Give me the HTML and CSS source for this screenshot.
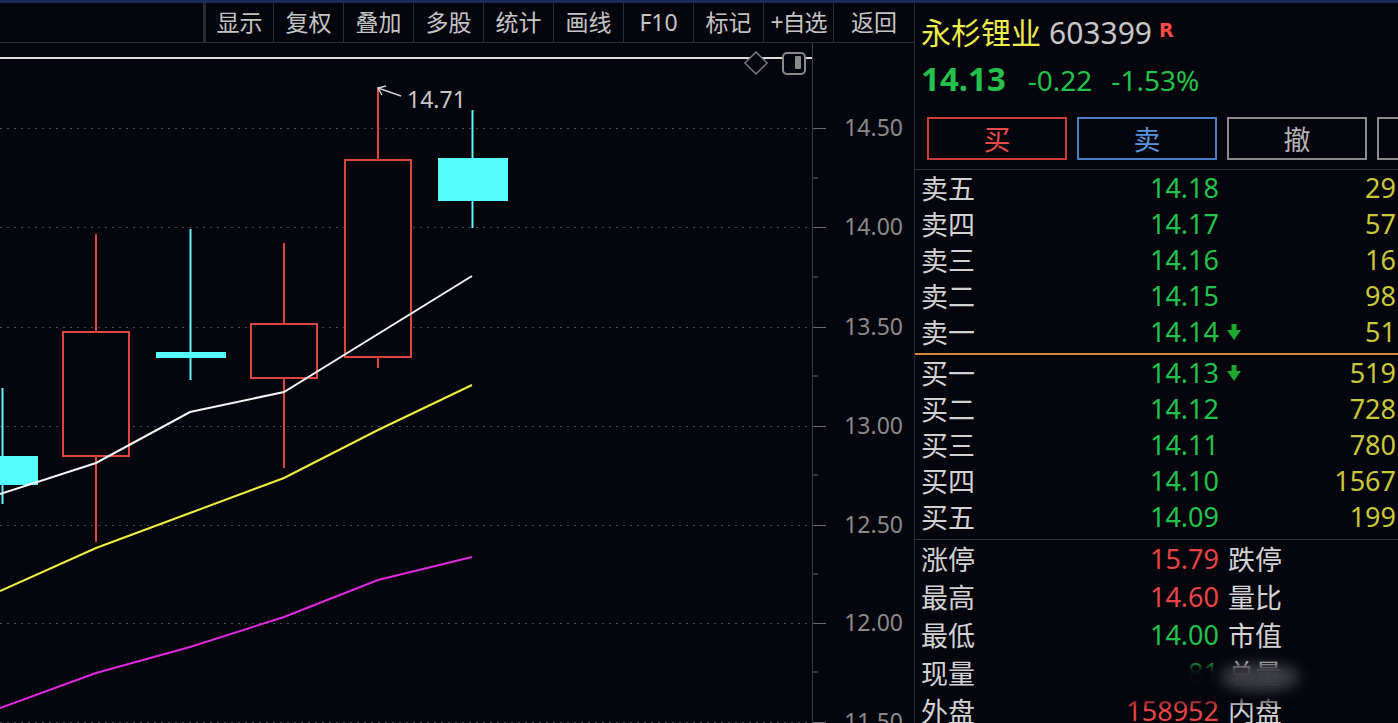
FILE: index.html
```html
<!DOCTYPE html>
<html lang="zh-CN">
<head>
  <meta charset="UTF-8">
  <title>永杉锂业 603399</title>
  <link rel="stylesheet" href="styles.css">
</head>
<body>
  <div class="app">
    <div class="main">
      <div class="toolbar">
        <div class="toolbar-space"></div>
        <button class="tool tool-first">显示</button>
        <button class="tool">复权</button>
        <button class="tool">叠加</button>
        <button class="tool">多股</button>
        <button class="tool">统计</button>
        <button class="tool">画线</button>
        <button class="tool">F10</button>
        <button class="tool">标记</button>
        <button class="tool tool-fav">+自选</button>
        <button class="tool tool-last">返回</button>
      </div>

      <svg class="chart" width="914" height="680" viewBox="0 43 914 680">
        <!-- grid -->
        <g class="grid">
          <line x1="0" y1="128.5" x2="810" y2="128.5"/>
          <line x1="0" y1="227.5" x2="810" y2="227.5"/>
          <line x1="0" y1="327.5" x2="810" y2="327.5"/>
          <line x1="0" y1="426.5" x2="810" y2="426.5"/>
          <line x1="0" y1="525.5" x2="810" y2="525.5"/>
          <line x1="0" y1="623.5" x2="810" y2="623.5"/>
          <line x1="0" y1="722.5" x2="810" y2="722.5"/>
        </g>
        <line class="frame-top" x1="0" y1="58" x2="812" y2="58"/>
        <line class="axis-line" x1="812.5" y1="43" x2="812.5" y2="723"/>
        <g class="ticks">
          <line x1="813" y1="128.5" x2="826" y2="128.5"/>
          <line x1="813" y1="178" x2="818" y2="178"/>
          <line x1="813" y1="227.5" x2="826" y2="227.5"/>
          <line x1="813" y1="277" x2="818" y2="277"/>
          <line x1="813" y1="327.5" x2="826" y2="327.5"/>
          <line x1="813" y1="376" x2="818" y2="376"/>
          <line x1="813" y1="426.5" x2="826" y2="426.5"/>
          <line x1="813" y1="475" x2="818" y2="475"/>
          <line x1="813" y1="525.5" x2="826" y2="525.5"/>
          <line x1="813" y1="574" x2="818" y2="574"/>
          <line x1="813" y1="623.5" x2="826" y2="623.5"/>
          <line x1="813" y1="672" x2="818" y2="672"/>
          <line x1="813" y1="722.5" x2="826" y2="722.5"/>
        </g>
        <g class="axis-labels">
          <text x="903" y="136">14.50</text>
          <text x="903" y="235">14.00</text>
          <text x="903" y="335">13.50</text>
          <text x="903" y="434">13.00</text>
          <text x="903" y="533">12.50</text>
          <text x="903" y="631">12.00</text>
          <text x="903" y="730">11.50</text>
        </g>

        <!-- chart tools -->
        <polygon class="icon" points="756,52 767,63 756,74 745,63"/>
        <rect class="icon icon-box" x="783" y="53" width="22" height="21" rx="4"/>
        <rect class="icon-fill" x="795" y="56" width="6" height="13" rx="1"/>

        <!-- candles -->
        <g class="down">
          <line x1="2.5" y1="388" x2="2.5" y2="504"/>
          <rect x="-2" y="456" width="40" height="29"/>
          <line x1="190.5" y1="229" x2="190.5" y2="380"/>
          <rect x="156" y="352" width="70" height="6"/>
          <line x1="472.5" y1="110" x2="472.5" y2="228"/>
          <rect x="438" y="158" width="70" height="43"/>
        </g>
        <g class="up">
          <line x1="96" y1="234" x2="96" y2="332"/>
          <line x1="96" y1="456" x2="96" y2="542"/>
          <rect x="63" y="332" width="66" height="124"/>
          <line x1="284" y1="243" x2="284" y2="324"/>
          <line x1="284" y1="378" x2="284" y2="468"/>
          <rect x="251" y="324" width="66" height="54"/>
          <line x1="378" y1="88" x2="378" y2="160"/>
          <line x1="378" y1="357" x2="378" y2="368"/>
          <rect x="345" y="160" width="66" height="197"/>
        </g>

        <!-- moving averages -->
        <polyline class="ma ma5" points="0,494 96,463 190,412 284,392 378,334 472,276"/>
        <polyline class="ma ma10" points="0,591 96,548 190,513 284,478 378,430 472,385"/>
        <polyline class="ma ma20" points="0,708 96,673 190,647 284,617 378,580 472,557"/>

        <!-- high marker -->
        <g class="mark">
          <line x1="378" y1="88" x2="401" y2="96"/>
          <polyline points="386,86 378,88 382,95"/>
        </g>
        <text class="mark-text" x="407" y="108">14.71</text>
      </svg>
    </div>

    <aside class="quote">
      <div class="q-title">
        <span class="q-name">永杉锂业</span>
        <span class="q-code">603399</span>
        <span class="q-flag">R</span>
      </div>
      <div class="q-price">
        <span class="q-last">14.13</span>
        <span class="q-chg q-chg-first">-0.22</span>
        <span class="q-chg">-1.53%</span>
      </div>
      <div class="q-actions">
        <button class="q-btn q-buy">买</button>
        <button class="q-btn q-sell">卖</button>
        <button class="q-btn q-cancel">撤</button>
        <button class="q-btn q-cancel"></button>
      </div>

      <div class="book book-sell">
        <div class="row"><span class="lbl">卖五</span><span class="px">14.18</span><span class="flag"></span><span class="vol">29</span></div>
        <div class="row"><span class="lbl">卖四</span><span class="px">14.17</span><span class="flag"></span><span class="vol">57</span></div>
        <div class="row"><span class="lbl">卖三</span><span class="px">14.16</span><span class="flag"></span><span class="vol">16</span></div>
        <div class="row"><span class="lbl">卖二</span><span class="px">14.15</span><span class="flag"></span><span class="vol">98</span></div>
        <div class="row"><span class="lbl">卖一</span><span class="px">14.14</span><span class="flag"><svg width="16" height="18" viewBox="0 0 16 18"><rect x="5.5" y="1" width="5" height="8"/><polygon points="1,7 15,7 8,17"/></svg></span><span class="vol">51</span></div>
      </div>

      <div class="book book-buy">
        <div class="row"><span class="lbl">买一</span><span class="px">14.13</span><span class="flag"><svg width="16" height="18" viewBox="0 0 16 18"><rect x="5.5" y="1" width="5" height="8"/><polygon points="1,7 15,7 8,17"/></svg></span><span class="vol">519</span></div>
        <div class="row"><span class="lbl">买二</span><span class="px">14.12</span><span class="flag"></span><span class="vol">728</span></div>
        <div class="row"><span class="lbl">买三</span><span class="px">14.11</span><span class="flag"></span><span class="vol">780</span></div>
        <div class="row"><span class="lbl">买四</span><span class="px">14.10</span><span class="flag"></span><span class="vol">1567</span></div>
        <div class="row"><span class="lbl">买五</span><span class="px">14.09</span><span class="flag"></span><span class="vol">199</span></div>
      </div>

      <div class="stats">
        <div class="srow"><span class="lbl">涨停</span><span class="val up-c">15.79</span><span class="lbl2">跌停</span></div>
        <div class="srow"><span class="lbl">最高</span><span class="val up-c">14.60</span><span class="lbl2">量比</span></div>
        <div class="srow"><span class="lbl">最低</span><span class="val down-c">14.00</span><span class="lbl2">市值</span></div>
        <div class="srow"><span class="lbl">现量</span><span class="val down-c">81</span><span class="lbl2">总量</span></div>
        <div class="srow"><span class="lbl">外盘</span><span class="val up-c">158952</span><span class="lbl2">内盘</span></div>
      </div>
      <div class="smudge"></div>
      <div class="smudge-light"></div>
    </aside>
  </div>
</body>
</html>
```

FILE: styles.css
```css
* {
  box-sizing: border-box;
}

body {
  margin: 0;
  background: #05050d;
  color: #d0d0d0;
  font-family: "Noto Sans", "Noto Sans CJK SC", sans-serif;
  overflow: hidden;
}

.app {
  display: flex;
  height: 723px;
  border-top: 3px solid #1b2b58;
}

/* left side: toolbar + kline */
.main {
  width: 914px;
  display: flex;
  flex-direction: column;
}

.toolbar {
  display: flex;
  height: 40px;
  border-bottom: 1px solid #2c2c33;
}

.toolbar-space {
  flex: 1;
  border-right: 3px solid #2a2a30;
}

.tool {
  width: 70px;
  padding: 0;
  background: none;
  border: none;
  border-right: 1px solid #2c2c33;
  color: #c4c4c4;
  font-family: "Noto Sans", "Noto Sans CJK SC", sans-serif;
  font-size: 23px;
  line-height: 39px;
  text-align: center;
  white-space: nowrap;
}

.tool-first {
  width: 68px;
}

.tool-fav {
  letter-spacing: -1px;
}

.tool-last {
  width: 80px;
  border-right: none;
}

.chart {
  display: block;
}

.grid line {
  stroke: #4a4a52;
  stroke-width: 1;
  stroke-dasharray: 2 5;
}

.frame-top {
  stroke: #dcdcdc;
  stroke-width: 2;
}

.axis-line {
  stroke: #3a3a42;
  stroke-width: 1;
}

.ticks line {
  stroke: #6a6a6a;
  stroke-width: 1;
}

.axis-labels text {
  font-family: "Noto Sans", sans-serif;
  font-size: 23px;
  fill: #8a8a8a;
  text-anchor: end;
}

.icon {
  fill: #05050d;
  stroke: #7a7a7a;
  stroke-width: 1.5;
}

.icon-box {
  stroke: #8a8a8a;
  stroke-width: 2;
}

.icon-fill {
  fill: #8a8a8a;
}

.down line {
  stroke: #5ef6f6;
  stroke-width: 2;
}

.down rect {
  fill: #55ffff;
}

.up line {
  stroke: #e0443f;
  stroke-width: 2;
}

.up rect {
  fill: #05050d;
  stroke: #e0443f;
  stroke-width: 2;
}

.ma {
  fill: none;
  stroke-width: 2;
}

.ma5 {
  stroke: #f6f6f6;
}

.ma10 {
  stroke: #f0f040;
}

.ma20 {
  stroke: #e028e0;
}

.mark line,
.mark polyline {
  fill: none;
  stroke: #d0d0d0;
  stroke-width: 1.5;
}

.mark-text {
  font-family: "Noto Sans", sans-serif;
  font-size: 23px;
  fill: #c8c8c8;
}

/* right side: quote panel */
.quote {
  position: relative;
  flex: 1;
  border-left: 1px solid #2c2c34;
  overflow: hidden;
  white-space: nowrap;
}

.q-title {
  display: flex;
  align-items: baseline;
  height: 40px;
  margin: 8px 0 0 6px;
  line-height: 40px;
}

.q-name {
  font-family: "Noto Sans CJK SC", sans-serif;
  font-size: 30px;
  color: #ecec4c;
}

.q-code {
  margin-left: 8px;
  font-size: 30px;
  color: #c8c8c8;
}

.q-flag {
  margin-left: 7px;
  font-family: "DejaVu Sans", sans-serif;
  font-size: 19px;
  font-weight: bold;
  color: #ff4a4a;
  position: relative;
  top: -7px;
}

.q-price {
  display: flex;
  align-items: baseline;
  height: 40px;
  margin: 8px 0 0 6px;
  line-height: 40px;
  color: #22c24c;
}

.q-last {
  font-size: 33px;
  font-weight: bold;
}

.q-chg {
  margin-left: 19px;
  font-size: 28px;
}

.q-chg-first {
  margin-left: 22px;
}

.q-actions {
  display: flex;
  gap: 10px;
  margin: 18px 0 0 12px;
}

.q-btn {
  flex: none;
  width: 140px;
  height: 43px;
  padding: 0;
  background: none;
  border: 2px solid;
  font-family: "Noto Sans CJK SC", sans-serif;
  font-size: 27px;
  line-height: 38px;
}

.q-buy {
  border-color: #d03c3c;
  color: #e84a4a;
}

.q-sell {
  border-color: #4a7ec8;
  color: #5a94dc;
}

.q-cancel {
  border-color: #8a8a8a;
  color: #b4b4b4;
}

.book {
  margin-top: 9px;
  border-top: 1px solid #33333b;
}

.book-sell {
  padding-bottom: 3px;
}

.book-buy {
  margin-top: 0;
  border-top: 2px solid #d0883e;
  padding-bottom: 4px;
}

.row,
.srow {
  display: grid;
  grid-template-columns: 80px 218px 28px 1fr;
  height: 36px;
  padding-left: 6px;
  font-size: 27px;
  line-height: 36px;
}

.lbl,
.lbl2 {
  font-family: "Noto Sans CJK SC", sans-serif;
  color: #d2d2d2;
}

.px {
  text-align: right;
  color: #22c24c;
}

.flag {
  padding-left: 7px;
  display: flex;
  align-items: center;
}

.flag svg {
  fill: #1fa82e;
}

.vol {
  text-align: right;
  padding-right: 2px;
  color: #c8c83a;
}

.stats {
  border-top: 1px solid #33333b;
}

.srow {
  grid-template-columns: 80px 218px 1fr;
  height: 38px;
  line-height: 38px;
}

.val {
  text-align: right;
}

.lbl2 {
  padding-left: 9px;
}

.up-c {
  color: #e84444;
}

.down-c {
  color: #22c24c;
}

/* blurred watermark over the lower rows */
.smudge {
  position: absolute;
  left: 175px;
  top: 662px;
  width: 320px;
  height: 36px;
  background: rgba(5, 5, 13, 0.97);
  filter: blur(4px);
}

.smudge-light {
  position: absolute;
  left: 305px;
  top: 660px;
  width: 80px;
  height: 28px;
  border-radius: 50%;
  background: rgba(190, 190, 195, 0.3);
  filter: blur(7px);
}
```
